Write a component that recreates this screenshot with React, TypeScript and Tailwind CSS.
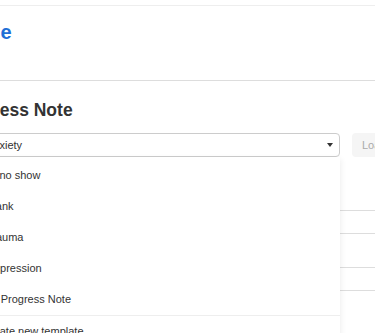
export default function App() {
  const items: { t: string; pl: string }[] = [
    { t: "Pt no show", pl: "pl-[14px]" },
    { t: "Blank", pl: "pl-[14px]" },
    { t: "Trauma", pl: "pl-[14px]" },
    { t: "Depression", pl: "pl-[14px]" },
    { t: "My Progress Note", pl: "pl-[11px]" },
  ];
  return (
    <div className="relative w-[375px] h-[333px] overflow-hidden bg-white font-['Liberation_Sans',Arial,sans-serif] text-[#333]">
      <div className="h-[6px] border-b border-[#eeeeee]" />
      <div className="h-[75px] border-b border-[#dddddd] pt-[14px]">
        <div className="ml-[-44px] text-[20px] leading-[24px] font-bold text-[#1f6fd6] whitespace-nowrap">
          Home
        </div>
      </div>
      <div className="ml-[-48px] w-[480px]">
        <h1 className="mt-[18px] ml-[1px] text-[17.5px] leading-[22px] font-bold text-[#333] whitespace-nowrap">
          Progress Note
        </h1>
        <div className="mt-[12px] flex items-center gap-3">
          <div className="relative ml-[20px] w-[368px] shrink-0">
            <div className="h-[24px] border border-[#cccccc] rounded-[4px] flex items-center pl-[13px] text-[11px] text-[#333]">
              <span>Anxiety</span>
              <span className="ml-auto mr-[6px] w-0 h-0 border-l-[3.5px] border-r-[3.5px] border-t-[4px] border-l-transparent border-r-transparent border-t-[#333]" />
            </div>
            <div className="absolute left-0 right-0 top-full z-10 bg-white pt-[3px] shadow-[1px_2px_6px_rgba(0,0,0,0.07)]">
              {items.map((it) => (
                <div
                  key={it.t}
                  className={`h-[31px] flex items-center ${it.pl} text-[11px] text-[#333] whitespace-nowrap`}
                >
                  {it.t}
                </div>
              ))}
              <div className="h-[32px] border-t border-[#eeeeee] flex items-center pl-[10px] text-[11px] text-[#333] whitespace-nowrap">
                Create new template
              </div>
            </div>
          </div>
          <button className="h-[24px] px-[10px] rounded-[4px] bg-[#f5f5f5] text-[#aaaaaa] text-[11px] shrink-0 whitespace-nowrap text-left">
            Load template
          </button>
        </div>
        <div className="h-[54px] border-b border-[#dddddd]" />
        <div className="h-[23px] border-b border-[#dddddd]" />
        <div className="h-[34px] border-b border-[#dddddd]" />
        <div className="h-[23px] border-b border-[#dddddd]" />
      </div>
    </div>
  );
}
